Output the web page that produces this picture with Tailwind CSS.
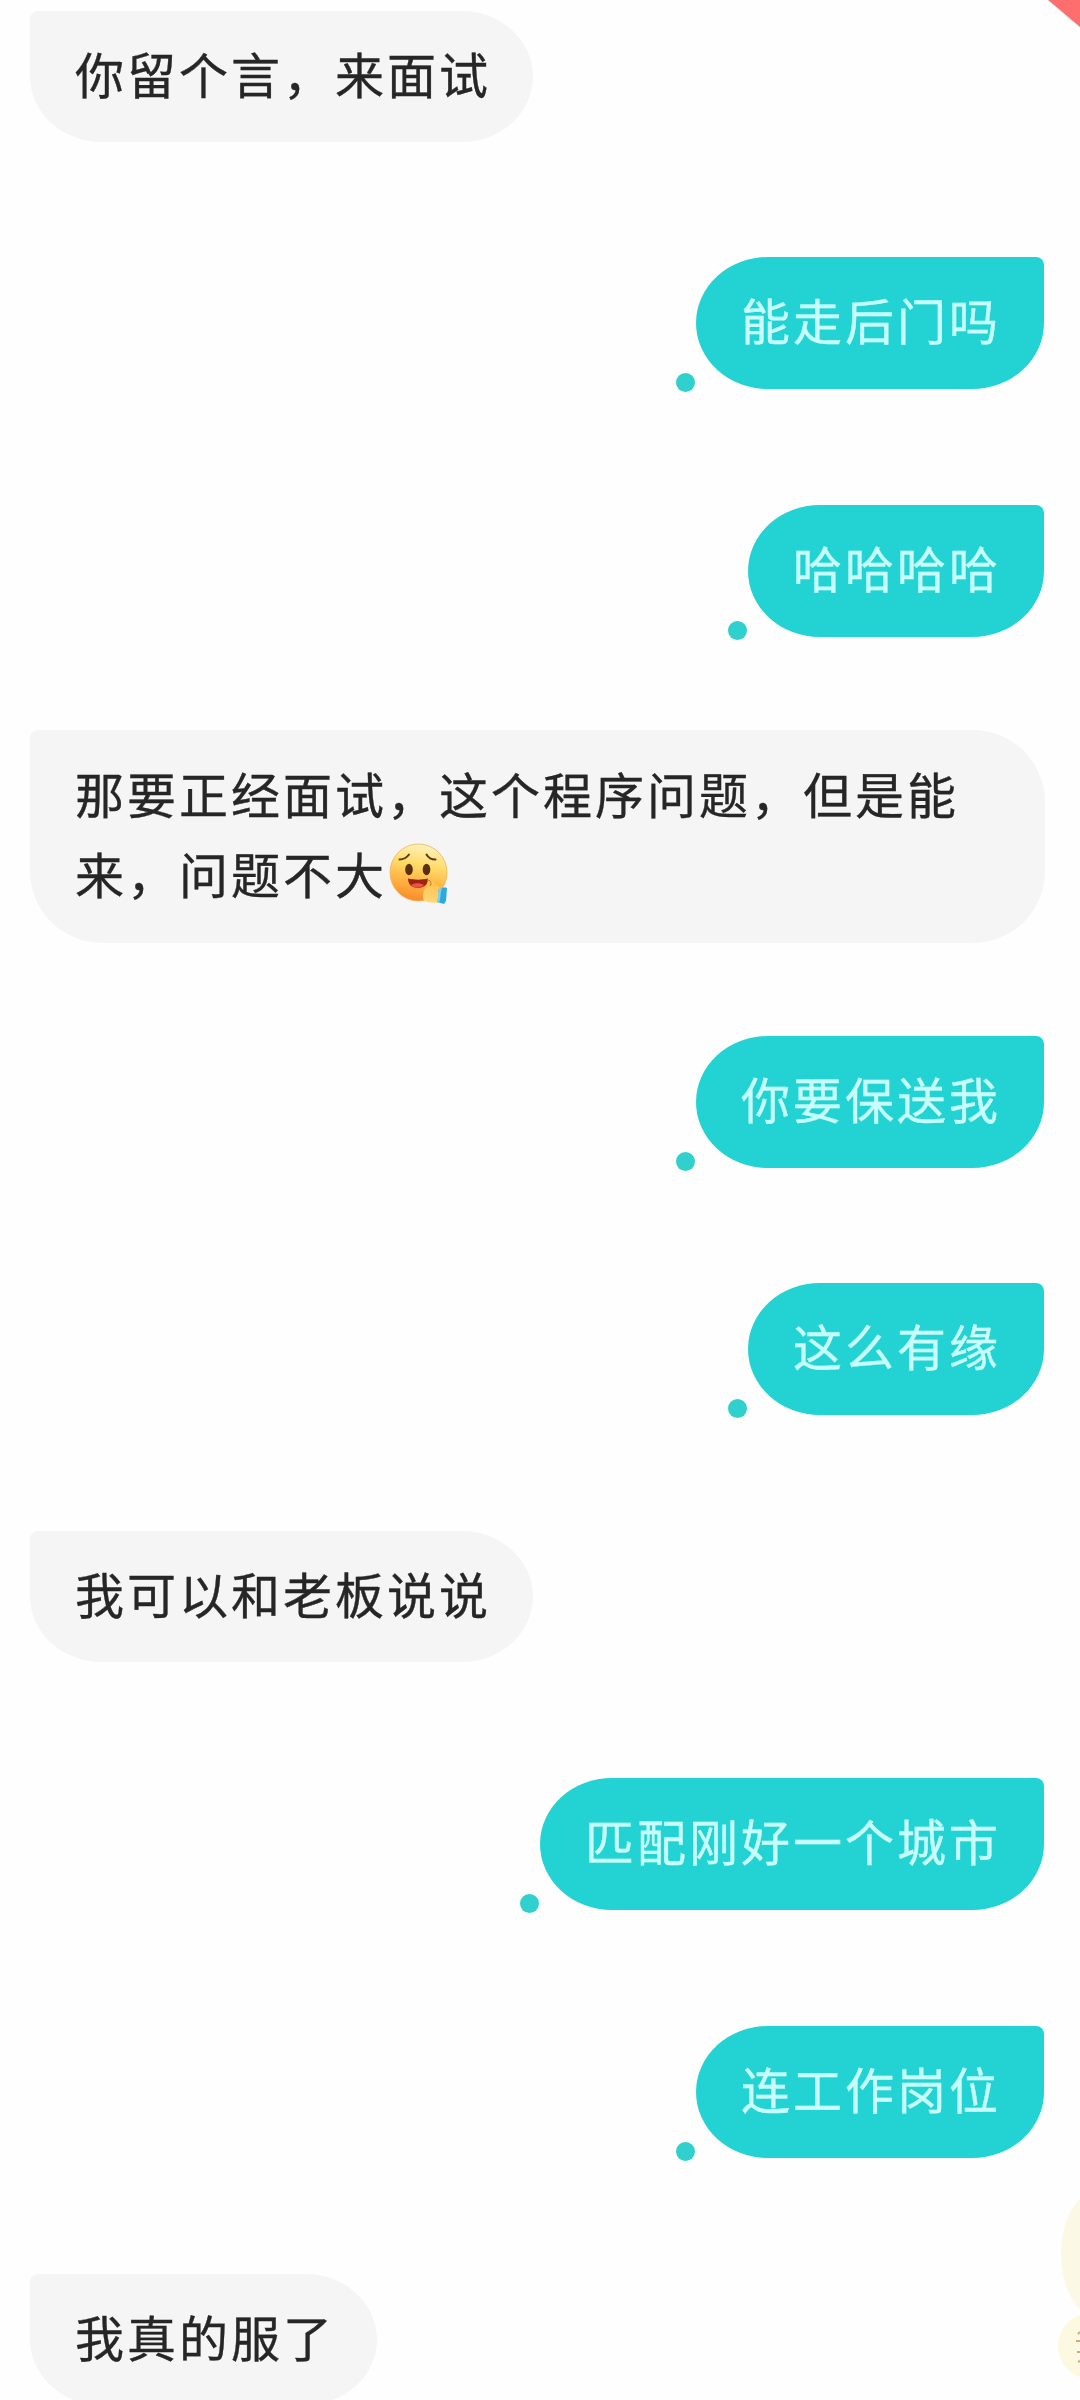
<!DOCTYPE html>
<html lang="zh-CN">
<head>
<meta charset="utf-8">
<title>聊天</title>
<script src="https://cdn.jsdelivr.net/npm/@tailwindcss/browser@4"></script>
</head>
<body class="bg-[#fefefe]">
<main class="relative flex h-[2400px] w-[1080px] flex-col overflow-hidden bg-[#fefefe] pt-[11px] pr-[36px] pl-[30px] font-['Noto_Sans_CJK_SC',sans-serif] text-[49px] leading-[80px] tracking-[3px] whitespace-nowrap text-[#262626] [-webkit-text-stroke:0.35px_currentColor]">
  <div class="shrink-0 self-start rounded-[72px/66px] rounded-tl-[8px] bg-[#f5f5f5] pt-[22px] pr-[42px] pb-[29px] pl-[45px]">你留个言，来面试</div>

  <div class="relative mt-[115px] shrink-0 self-end rounded-[72px/66px] rounded-tr-[8px] bg-[#23d3d3] pt-[22px] pr-[43px] pb-[30px] pl-[45px] text-[#c8fffd]">能走后门吗<span class="absolute -bottom-[3px] -left-[20px] size-[19px] rounded-full bg-[#2fd0ce]"></span></div>

  <div class="relative mt-[116px] shrink-0 self-end rounded-[72px/66px] rounded-tr-[8px] bg-[#23d3d3] pt-[22px] pr-[43px] pb-[30px] pl-[45px] text-[#c8fffd]">哈哈哈哈<span class="absolute -bottom-[3px] -left-[20px] size-[19px] rounded-full bg-[#2fd0ce]"></span></div>

  <div class="mt-[93px] -mr-px shrink-0 rounded-[72px] rounded-tl-[8px] bg-[#f5f5f5] pt-[23px] pb-[30px] pl-[45px]">
    <p>那要正经面试，这个程序问题，但是能</p>
    <p class="flex items-center">来，问题不大<svg class="mt-[2px] ml-[2px] h-[62px] w-[60px]" viewBox="0 0 60 62" fill="none">
      <defs>
        <linearGradient id="face" x1="34" y1="0" x2="22" y2="60" gradientUnits="userSpaceOnUse">
          <stop offset="0" stop-color="#fff3c4"/><stop offset=".35" stop-color="#ffdc6b"/><stop offset=".68" stop-color="#ffb03f"/><stop offset="1" stop-color="#f98528"/>
        </linearGradient>
        <linearGradient id="hand" x1="44" y1="36" x2="40" y2="60" gradientUnits="userSpaceOnUse">
          <stop offset="0" stop-color="#ffc04e"/><stop offset="1" stop-color="#ffd878"/>
        </linearGradient>
      </defs>
      <circle cx="29.500" cy="29.500" r="28.500" fill="url(#face)" stroke="#eeb45a" stroke-width=".8"/>
      <path d="M10.500 16.500c4 0 7-1.500 9.500-5M37.500 11.500c2 3.500 5 5 9 5" stroke="#5d3a12" stroke-width="2" stroke-linecap="round"/>
      <ellipse cx="20" cy="26.500" rx="3.800" ry="5.800" fill="#5b2f10"/>
      <ellipse cx="37.500" cy="26.500" rx="3.800" ry="5.800" fill="#5b2f10"/>
      <path d="M19 35.500c6 1.500 14 1.500 20 0 0 6-4 9.500-10 9.500s-10-3.500-10-9.500z" fill="#9c2412"/>
      <path d="M22 42c4-2.500 9-2.500 13 0-3.500 3.500-9.500 3.500-13 0z" fill="#f0524a"/>
      <path d="M35 58c-2-5-1-11 3-15 1-3 1-8 4-8 3 0 2 5 4 7l8 4-2 13c-6 1-12 1-17-1z" fill="url(#hand)"/>
      <path d="M38 37c4 0 5 3 3 6" stroke="#c88a2c" stroke-width="1.200"/>
      <path d="M50 46c3-1 5-2 8-1l-1 13-2 3-7-2c2-4 0-8 2-13z" fill="#2fa9dc"/>
      <path d="M50 46l3-1c-2 5-1 10-3 15l-2-1c2-4 0-8 2-13z" fill="#7ed1ee"/>
    </svg></p>
  </div>

  <div class="relative mt-[93px] shrink-0 self-end rounded-[72px/66px] rounded-tr-[8px] bg-[#23d3d3] pt-[22px] pr-[43px] pb-[30px] pl-[45px] text-[#c8fffd]">你要保送我<span class="absolute -bottom-[3px] -left-[20px] size-[19px] rounded-full bg-[#2fd0ce]"></span></div>

  <div class="relative mt-[115px] shrink-0 self-end rounded-[72px/66px] rounded-tr-[8px] bg-[#23d3d3] pt-[22px] pr-[43px] pb-[30px] pl-[45px] text-[#c8fffd]">这么有缘<span class="absolute -bottom-[3px] -left-[20px] size-[19px] rounded-full bg-[#2fd0ce]"></span></div>

  <div class="mt-[116px] shrink-0 self-start rounded-[72px/66px] rounded-tl-[8px] bg-[#f5f5f5] pt-[22px] pr-[42px] pb-[29px] pl-[45px]">我可以和老板说说</div>

  <div class="relative mt-[116px] shrink-0 self-end rounded-[72px/66px] rounded-tr-[8px] bg-[#23d3d3] pt-[22px] pr-[43px] pb-[30px] pl-[45px] text-[#c8fffd]">匹配刚好一个城市<span class="absolute -bottom-[3px] -left-[20px] size-[19px] rounded-full bg-[#2fd0ce]"></span></div>

  <div class="relative mt-[116px] shrink-0 self-end rounded-[72px/66px] rounded-tr-[8px] bg-[#23d3d3] pt-[22px] pr-[43px] pb-[30px] pl-[45px] text-[#c8fffd]">连工作岗位<span class="absolute -bottom-[3px] -left-[20px] size-[19px] rounded-full bg-[#2fd0ce]"></span></div>

  <div class="mt-[116px] shrink-0 self-start rounded-[72px/66px] rounded-tl-[8px] bg-[#f5f5f5] pt-[22px] pr-[42px] pb-[29px] pl-[45px]">我真的服了</div>

  <!-- Corner ribbon -->
  <svg class="absolute top-0 right-0 h-[28px] w-[32px]" viewBox="0 0 32 28"><path d="M0 0H32V27z" fill="#ff6e6e"/></svg>

  <!-- Floating sticker peeking in from the right edge -->
  <svg class="absolute top-[2190px] right-0 h-[200px] w-[24px]" viewBox="0 0 24 200">
    <ellipse cx="40" cy="64" rx="35" ry="62" fill="#fcf8e6"/>
    <circle cx="35" cy="156" r="33" fill="#fdf8e0"/>
    <path d="M22 144l2-2M20 151h4M21 162h3M22 172l2-1" stroke="#c9ac86" stroke-width="2"/>
  </svg>
</main>
</body>
</html>
